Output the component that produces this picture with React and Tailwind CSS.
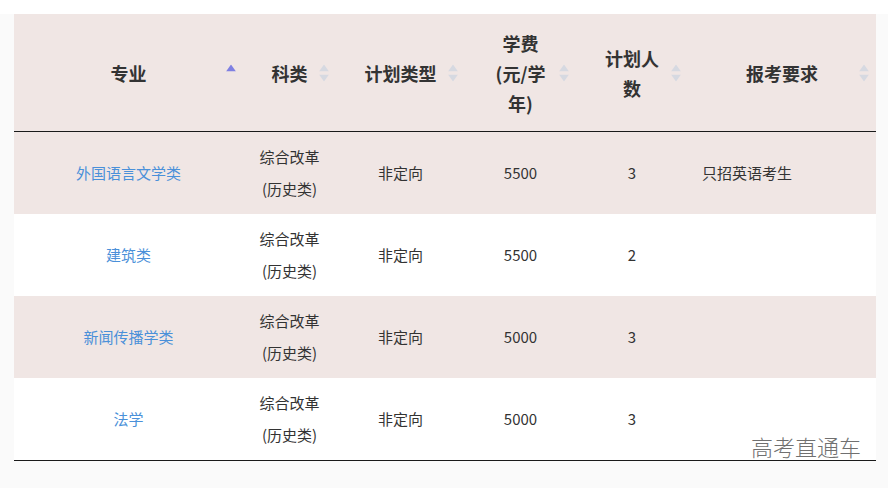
import React from "react";

function SortIcon({ active }) {
  return (
    <span className="absolute right-[7px] top-1/2 -translate-y-1/2 flex flex-col items-center gap-[3px]">
      <svg width="10" height="7" viewBox="0 0 10 7">
        <polygon points="5,0 10,7 0,7" fill={active ? "#7f80e2" : "#d6d9e1"} />
      </svg>
      <svg width="10" height="7" viewBox="0 0 10 7">
        <polygon points="0,0 10,0 5,7" fill={active ? "transparent" : "#d6d9e1"} />
      </svg>
    </span>
  );
}

const rows = [
  { name: "外国语言文学类", fee: "5500", num: "3", req: "只招英语考生" },
  { name: "建筑类", fee: "5500", num: "2", req: "" },
  { name: "新闻传播学类", fee: "5000", num: "3", req: "" },
  { name: "法学", fee: "5000", num: "3", req: "" },
];

const th = "relative text-center align-middle h-[118px] border-b border-[#1a1a1a] p-0";

export default function App() {
  const font = { fontFamily: '"Noto Sans CJK SC", "Microsoft YaHei", sans-serif' };
  return (
    <div className="w-[888px] h-[488px] bg-[#fafafa] relative overflow-hidden" style={font}>
      <div className="h-[14px] bg-white" />
      <div className="px-[14px]">
        <table className="table-fixed border-separate border-spacing-0 w-[862px] text-[#333]">
          <colgroup>
            <col className="w-[229px]" />
            <col className="w-[93px]" />
            <col className="w-[129px]" />
            <col className="w-[111px]" />
            <col className="w-[112px]" />
            <col className="w-[188px]" />
          </colgroup>
          <thead>
            <tr className="bg-[#f0e6e4] text-[18px] font-bold leading-[30px]">
              <th className={th}>
                专业
                <SortIcon active />
              </th>
              <th className={th}>
                科类
                <SortIcon />
              </th>
              <th className={th}>
                计划类型
                <SortIcon />
              </th>
              <th className={th}>
                <div>学费</div>
                <div>(元/学</div>
                <div>年)</div>
                <SortIcon />
              </th>
              <th className={th}>
                <div>计划人</div>
                <div>数</div>
                <SortIcon />
              </th>
              <th className={th}>
                报考要求
                <SortIcon />
              </th>
            </tr>
          </thead>
          <tbody className="text-[15px] leading-[32px]">
            {rows.map((r, i) => {
              const last = i === rows.length - 1;
              const td = `align-middle p-0 ${last ? "h-[83px] border-b border-[#1a1a1a]" : "h-[82px]"}`;
              return (
                <tr key={i} className={i % 2 === 0 ? "bg-[#f0e6e4]" : "bg-white"}>
                  <td className={`${td} text-center text-[#4a90d9]`}>{r.name}</td>
                  <td className={`${td} text-center`}>
                    <div>综合改革</div>
                    <div>(历史类)</div>
                  </td>
                  <td className={`${td} text-center`}>非定向</td>
                  <td className={`${td} text-center`}>{r.fee}</td>
                  <td className={`${td} text-center`}>{r.num}</td>
                  <td className={`${td} text-left pl-[14px]`}>{r.req}</td>
                </tr>
              );
            })}
          </tbody>
        </table>
      </div>
      <div className="absolute left-[751px] top-[432px] text-[22px] leading-[28px] text-[#707070] font-light">
        高考直通车
      </div>
    </div>
  );
}
